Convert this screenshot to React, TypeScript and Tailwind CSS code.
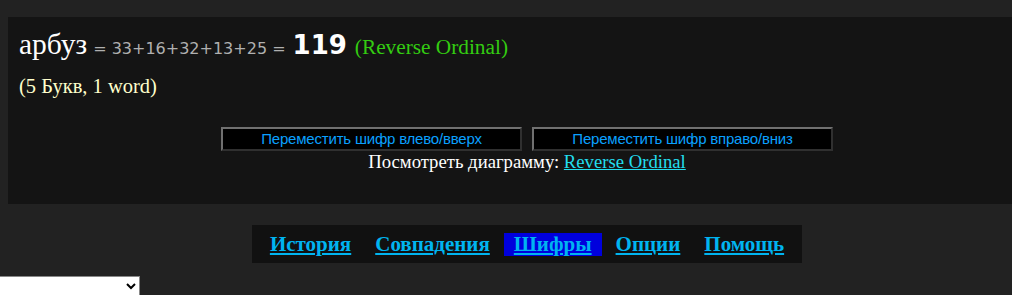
import React from "react";

export default function App() {
  const serif = { fontFamily: '"Liberation Serif", "Times New Roman", serif' };
  const nav = ["История", "Совпадения", "Шифры", "Опции", "Помощь"];
  const btn =
    "w-[301px] h-[24px] flex items-center justify-center bg-black border-2 border-[#707070] border-r-[#303030] border-b-[#303030]";
  const btnText = "text-[15px] text-[#0aa0ff] font-['Liberation_Sans',sans-serif] tracking-[-0.2px]";
  return (
    <div className="h-[295px] w-[1012px] bg-[#222222] overflow-hidden">
      <div className="w-[1054px] pt-[17px]" style={serif}>
        <div className="mx-[8px] bg-[#141414] h-[187px] pt-[14px]">
          <div className="pl-[11px] flex items-baseline whitespace-nowrap h-[26px] leading-[26px]">
            <span className="text-[29.5px] text-white">арбуз</span>
            <span className="text-[16px] text-[#b0b0b0] ml-[6px] font-['DejaVu_Sans',sans-serif]">= 33+16+32+13+25 =</span>
            <span className="text-[26px] text-white font-bold ml-[7px] font-['DejaVu_Sans',sans-serif]">119</span>
            <span className="text-[21.3px] text-[#33cc11] ml-[8px]">(Reverse Ordinal)</span>
          </div>
          <div className="pl-[11px] text-[20.5px] leading-[24px] text-[#ffffcc] mt-[17px]">(5 Букв, 1 word)</div>
          <div className="flex justify-center gap-[10px] mt-[29px]">
            <button className={btn}>
              <span className={btnText}>Переместить шифр влево/вверх</span>
            </button>
            <button className={btn}>
              <span className={btnText}>Переместить шифр вправо/вниз</span>
            </button>
          </div>
          <div className="text-center text-[18.7px] text-white leading-[22px]">
            Посмотреть диаграмму: <a className="text-[#22ddee] underline" href="#">Reverse Ordinal</a>
          </div>
        </div>
        <div className="flex justify-center mt-[21px]">
          <div className="bg-[#111111] h-[38px] flex items-center gap-[4px] px-[8px] font-bold text-[21px]">
            {nav.map((t) => (
              <a
                key={t}
                href="#"
                className={
                  "underline text-[#00b4f0] px-[10px] h-[23px] leading-[23px] " +
                  (t === "Шифры" ? "bg-[#0000dd]" : "")
                }
              >
                {t}
              </a>
            ))}
          </div>
        </div>
        <div className="mt-[10px] -ml-[20px]">
          <select className="w-[160px] h-[20px] bg-white border border-[#888] text-black text-[13px] font-['Liberation_Sans',sans-serif]">
            <option>h</option>
          </select>
        </div>
      </div>
    </div>
  );
}
